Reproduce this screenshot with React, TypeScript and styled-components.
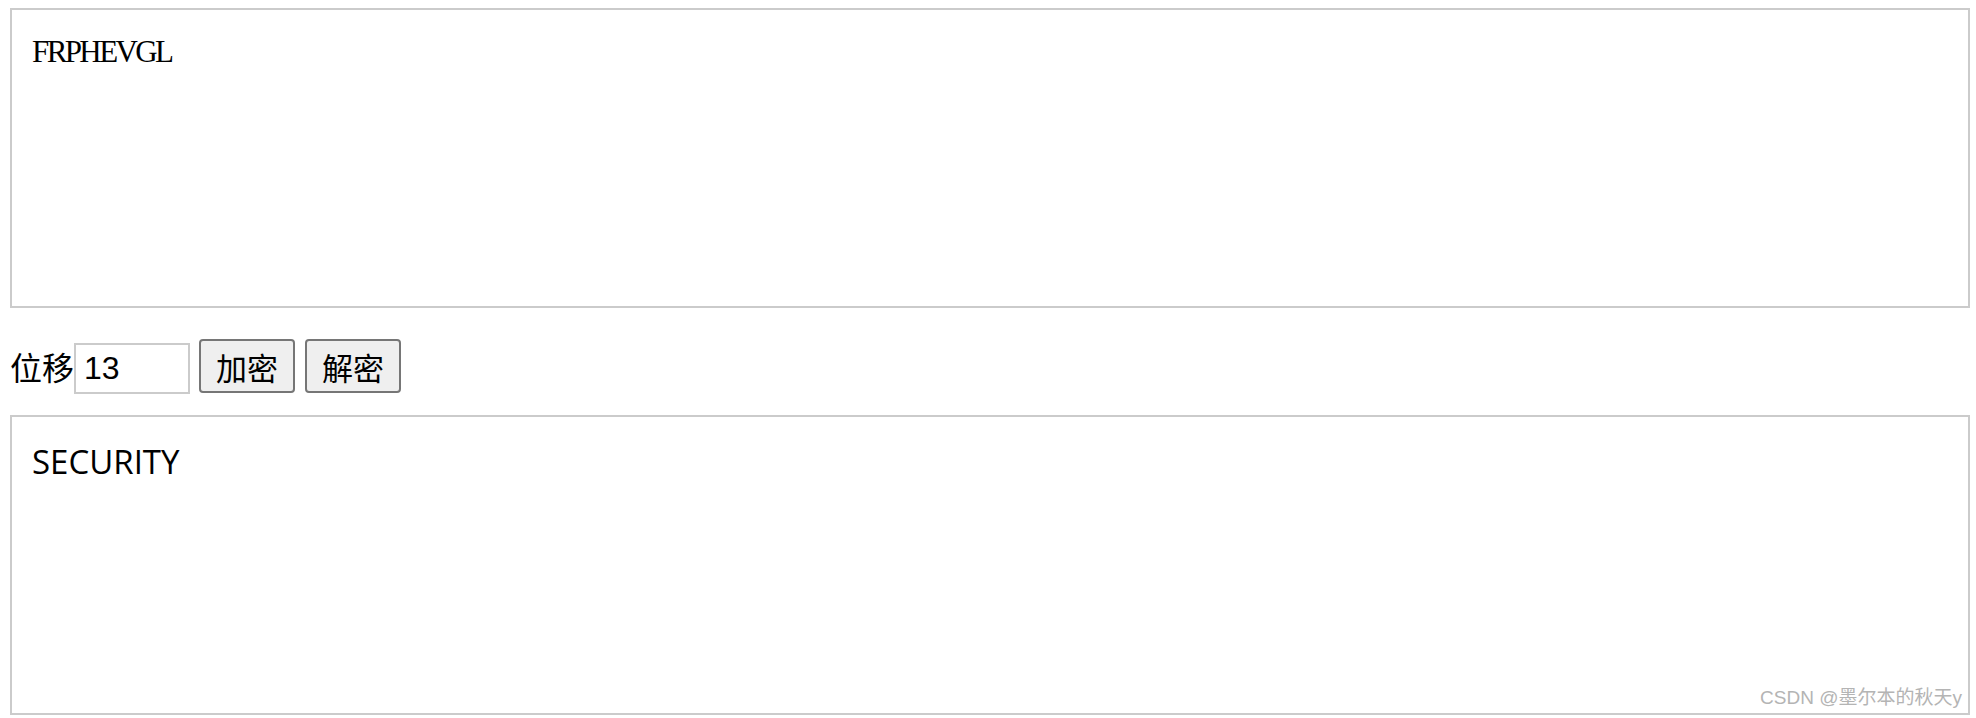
import styled, { createGlobalStyle } from 'styled-components'
import { useState } from 'react'

const GlobalStyle = createGlobalStyle`
  html, body {
    margin: 0;
    background: #fff;
  }
  body {
    padding: 8px 6px 0 10px;
    font-family: 'Noto Sans CJK SC', sans-serif;
    color: #000;
  }
`

const Page = styled.div`
  display: flex;
  flex-direction: column;
`

const TextBox = styled.textarea<{ $serif?: boolean }>`
  display: block;
  box-sizing: border-box;
  width: 100%;
  height: 300px;
  margin: 0;
  border: 2px solid #cbcbcb;
  border-radius: 0;
  outline: none;
  resize: none;
  background: #fff;
  color: #000;
  padding: ${p => (p.$serif ? '24px 20px' : '22px 20px')};
  font-family: ${p =>
    p.$serif
      ? "'Liberation Serif', 'Noto Sans CJK SC', serif"
      : "'Open Sans', 'Noto Sans CJK SC', sans-serif"};
  font-size: ${p => (p.$serif ? '31px' : '33px')};
  letter-spacing: ${p => (p.$serif ? '-2.6px' : '0')};
`

const Controls = styled.div`
  display: flex;
  align-items: center;
  height: 54px;
  margin: 31px 0 22px;
`

const Label = styled.span`
  font-family: 'Noto Sans CJK SC', sans-serif;
  font-size: 32px;
  line-height: 1;
`

const ShiftInput = styled.input`
  box-sizing: border-box;
  width: 116px;
  height: 51px;
  margin: 4px 9px 0 0;
  padding: 0 8px;
  border: 2px solid #cbcbcb;
  border-radius: 0;
  outline: none;
  font-family: 'Liberation Sans', Arial, sans-serif;
  font-size: 32px;
  color: #000;
`

const ActionButton = styled.button`
  box-sizing: border-box;
  width: 96px;
  height: 54px;
  margin-right: 10px;
  padding: 0;
  border: 2px solid #767676;
  border-radius: 4px;
  background: #efefef;
  color: #000;
  font-family: 'Noto Sans CJK SC', sans-serif;
  font-size: 31px;
  line-height: 1;
  cursor: pointer;
`

const OutputWrap = styled.div`
  position: relative;
`

const Watermark = styled.span`
  position: absolute;
  right: 8px;
  bottom: 6px;
  font-family: 'Liberation Sans', 'Noto Sans CJK SC', sans-serif;
  font-size: 19px;
  color: #b4b4b4;
  pointer-events: none;
  white-space: nowrap;
`

const App = () => {
  const [cipher, setCipher] = useState('FRPHEVGL')
  const [shift, setShift] = useState('13')
  const [plain, setPlain] = useState('SECURITY')

  return (
    <Page>
      <GlobalStyle />
      <TextBox $serif value={cipher} onChange={e => setCipher(e.target.value)} />
      <Controls>
        <Label>位移</Label>
        <ShiftInput value={shift} onChange={e => setShift(e.target.value)} />
        <ActionButton>加密</ActionButton>
        <ActionButton>解密</ActionButton>
      </Controls>
      <OutputWrap>
        <TextBox value={plain} onChange={e => setPlain(e.target.value)} />
        <Watermark>CSDN @墨尔本的秋天y</Watermark>
      </OutputWrap>
    </Page>
  )
}

export default App
